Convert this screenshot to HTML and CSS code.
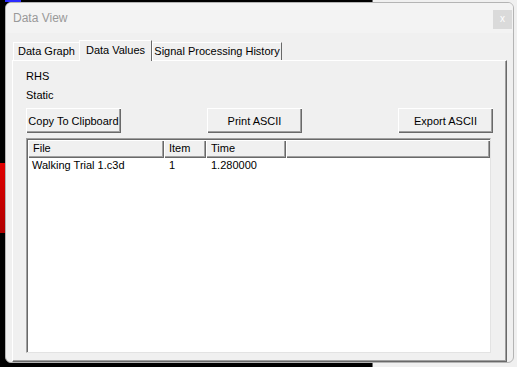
FILE: index.html
```html
<!DOCTYPE html>
<html lang="en">
<head>
    <meta charset="UTF-8">
    <title>Data View</title>
    <link rel="stylesheet" href="styles.css">
</head>
<body>
    <div class="window">
        <div class="titlebar">
            <span class="title">Data View</span>
            <span class="close">x</span>
        </div>
        <div class="client">
            <div class="tabs">
                <div class="tab tab-graph">Data Graph</div>
                <div class="tab active">Data Values</div>
                <div class="tab tab-history">Signal Processing History</div>
            </div>
            <div class="panel">
                <div class="label">RHS</div>
                <div class="label">Static</div>
                <div class="actions">
                    <button class="btn">Copy To Clipboard</button>
                    <button class="btn btn-print">Print ASCII</button>
                    <button class="btn btn-export">Export ASCII</button>
                </div>
                <div class="listview">
                    <div class="header">
                        <div class="col">File</div>
                        <div class="col">Item</div>
                        <div class="col">Time</div>
                        <div class="col"></div>
                    </div>
                    <div class="row">
                        <div class="cell">Walking Trial 1.c3d</div>
                        <div class="cell">1</div>
                        <div class="cell">1.280000</div>
                        <div class="cell"></div>
                    </div>
                </div>
            </div>
        </div>
    </div>
</body>
</html>
```

FILE: styles.css
```css
body {
    margin: 0;
    height: 367px;
    overflow: hidden;
    font-family: "Liberation Sans", Arial, sans-serif;
    font-size: 11px;
    color: #000;
    background:
        linear-gradient(#2b2bff, #2b2bff) 5px 0 / 16px 2px no-repeat,
        linear-gradient(#e00000, #b00000) 0 163px / 5px 70px no-repeat,
        linear-gradient(to right, #000 372px, #6e6e6e 372px, #6e6e6e 373px, #f0f0f0 373px);
}
.window {
    margin: 2px 0 0 5px;
    width: 509px;
    height: 361px;
    box-sizing: border-box;
    border: 1px solid #b4b4b4;
    border-radius: 6px;
    background: #f0f0f0;
    display: flex;
    flex-direction: column;
    overflow: hidden;
}
.titlebar {
    height: 30px;
    flex: none;
    display: flex;
    justify-content: space-between;
    align-items: flex-start;
    padding-left: 7px;
    background: #f3f3f3;
}
.title {
    margin-top: 8px;
    font-size: 12px;
    line-height: 14px;
    color: #999;
}
.close {
    width: 19px;
    height: 19px;
    margin: 7px 1px 0 0;
    background: #dadada;
    color: #fff;
    font-size: 10px;
    line-height: 17px;
    text-align: center;
}
.client {
    flex: 1;
    display: flex;
    flex-direction: column;
    padding: 7px 6px 0 6px;
}
.tabs {
    display: flex;
    align-items: flex-end;
    height: 20px;
    padding-left: 1px;
}
.tab {
    height: 18px;
    box-sizing: border-box;
    border-top: 1px solid #fff;
    border-left: 1px solid #fff;
    border-right: 1px solid #696969;
    line-height: 16px;
    text-align: center;
    white-space: nowrap;
}
.tab-graph {
    width: 66px;
    border-right: none;
}
.tab.active {
    width: 73px;
    height: 21px;
    margin-bottom: -1px;
    line-height: 18px;
    background: #f0f0f0;
    z-index: 1;
}
.tab-history {
    width: 130px;
}
.panel {
    flex: 1;
    display: flex;
    flex-direction: column;
    box-sizing: border-box;
    border-top: 1px solid #fff;
    border-left: 1px solid #fff;
    border-right: 1px solid #696969;
    border-bottom: 1px solid #696969;
    box-shadow: inset -1px -1px 0 #a0a0a0;
    padding: 6px 13px 0 13px;
}
.label {
    line-height: 19px;
}
.actions {
    display: flex;
    margin-top: 3px;
}
.btn {
    width: 95px;
    height: 25px;
    padding: 0;
    border: none;
    background: #f0f0f0;
    font-family: inherit;
    font-size: 11px;
    color: #000;
    box-shadow: inset 1px 1px 0 #fff, inset -1px -1px 0 #696969, inset -2px -2px 0 #a0a0a0;
}
.btn-print {
    margin-left: 86px;
}
.btn-export {
    margin-left: auto;
}
.listview {
    flex: 1;
    margin: 5px 2px 8px 0;
    padding: 1px 0 0 1px;
    background: #fff;
    border: 1px solid;
    border-color: #a0a0a0 #e3e3e3 #e3e3e3 #a0a0a0;
    box-shadow: inset 1px 1px 0 #696969;
}
.header, .row {
    display: grid;
    grid-template-columns: 136px 42px 80px 1fr;
}
.col {
    height: 18px;
    padding-left: 5px;
    line-height: 17px;
    background: #f0f0f0;
    box-shadow: inset 1px 1px 0 #fff, inset -1px -1px 0 #696969, inset -2px -2px 0 #a0a0a0;
}
.cell {
    height: 16px;
    padding-left: 5px;
    line-height: 15px;
    white-space: nowrap;
}
.cell:first-child {
    padding-left: 4px;
}
```
